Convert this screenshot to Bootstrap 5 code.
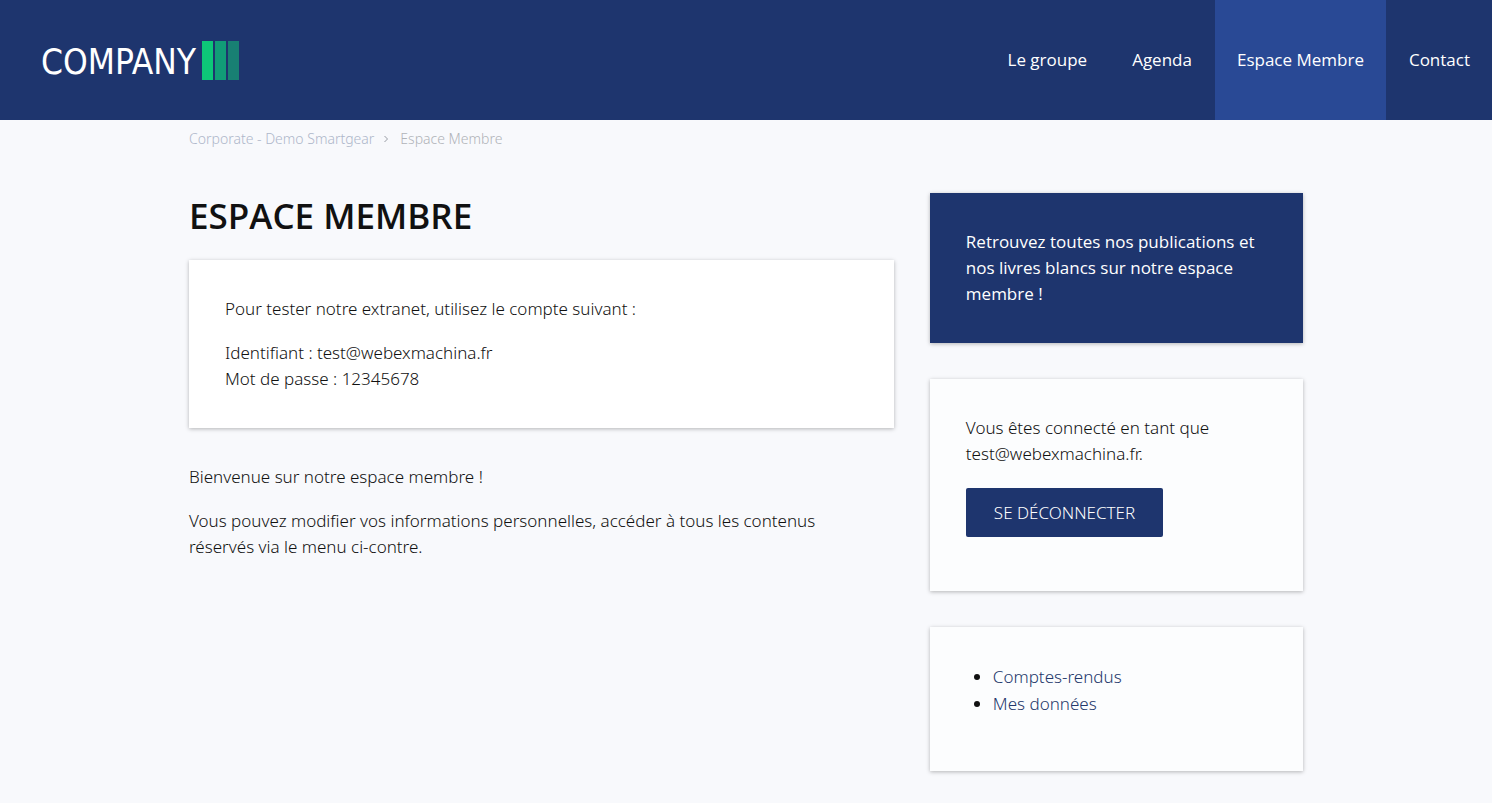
<!DOCTYPE html>
<html lang="fr">
<head>
<meta charset="utf-8">
<meta name="viewport" content="width=device-width, initial-scale=1">
<title>Espace Membre</title>
<link href="https://cdn.jsdelivr.net/npm/bootstrap@5.3.0/dist/css/bootstrap.min.css" rel="stylesheet">
<style>
  :root { --brand: #1e356e; --brand-light: #294995; --gutter: 36px; }
  body {
    font-family: "Noto Sans", "Open Sans", sans-serif;
    font-size: 17px; font-weight: 300; line-height: 26px;
    color: #111; background: #f8f9fc;
  }
  p { margin-bottom: 18px; }
  .site-header { background: var(--brand); min-height: 120px; }
  .site-logo { margin-left: 41px; gap: 6px; }
  .logo-word { font-family: "DejaVu Sans Condensed", "DejaVu Sans", sans-serif; font-size: 35px; line-height: 40px; font-weight: 400; }
  .site-nav { gap: 1px; }
  .site-nav .nav-link { padding: 0 22px; color: #fff; font-family: "Open Sans", sans-serif; font-weight: 400; }
  .site-nav .nav-link.active { background: var(--brand-light); }
  .page-wrap { max-width: 1150px; padding: 0 18px 32px; }
  .breadcrumb { font-size: 14px; line-height: 18px; padding-top: 10px; margin-bottom: 45px; color: #b0b3b8; }
  .breadcrumb a { color: #aeb7ca; }
  .breadcrumb svg { margin: 0 10px 0 9px; }
  .page-grid { display: grid; grid-template-columns: minmax(0, 17fr) minmax(0, 9fr); gap: var(--gutter); }
  h1 { font-family: "Open Sans", sans-serif; font-size: 35px; line-height: 46px; font-weight: 600; margin-bottom: 21px; }
  .panel { padding: var(--gutter); background: #fff; box-shadow: 0 1px 4px rgba(0, 0, 0, .28); }
  .panel p:last-child { margin-bottom: 0; }
  .panel-intro { margin-bottom: var(--gutter); }
  .welcome { padding-right: var(--gutter); }
  .side-column { gap: var(--gutter); }
  .panel-soft { background: #fcfdfe; }
  .panel-brand { background: var(--brand); color: #fff; font-family: "Open Sans", sans-serif; font-weight: 400; }
  .btn-brand { background: var(--brand); color: #fff; border: 0; border-radius: 2px; font-size: 17px; font-weight: 300; line-height: 25px; padding: 12px 28px; margin: 3px 0 18px; }
  .btn-brand:hover { background: var(--brand-light); color: #fff; }
  .member-menu { padding-left: 27px; margin-bottom: 18px; line-height: 27px; }
  .member-menu a { color: #24386b; }
</style>
</head>
<body>
<header class="site-header d-flex align-items-stretch justify-content-between">
  <a href="#" class="site-logo d-flex align-items-center text-white text-decoration-none" aria-label="Company">
    <span class="logo-word pt-1">COMPANY</span>
    <svg width="38" height="40" viewBox="0 0 38 40" aria-hidden="true">
      <path fill="#0dc778" d="M0 1h11v39H0z"/><path fill="#119c77" d="M13 1h11v39H13z"/><path fill="#188073" d="M26 1h11v39H26z"/>
    </svg>
  </a>
  <nav class="site-nav nav align-items-stretch" aria-label="Navigation principale">
    <a class="nav-link d-flex align-items-center" href="#">Le groupe</a>
    <a class="nav-link d-flex align-items-center" href="#">Agenda</a>
    <a class="nav-link d-flex align-items-center active" aria-current="page" href="#">Espace Membre</a>
    <a class="nav-link d-flex align-items-center" href="#">Contact</a>
  </nav>
</header>
<div class="page-wrap container-fluid">
  <nav class="breadcrumb align-items-center" aria-label="Fil d'Ariane">
    <a class="text-decoration-none" href="#">Corporate - Demo Smartgear</a>
    <svg width="7" height="8" viewBox="0 0 7 8" fill="none" stroke="#989ca4" aria-hidden="true"><path d="M1.500 1l3 3-3 3"/></svg>
    <span>Espace Membre</span>
  </nav>
  <div class="page-grid">
    <main>
      <h1>ESPACE MEMBRE</h1>
      <section class="panel panel-intro">
        <p>Pour tester notre extranet, utilisez le compte suivant :</p>
        <p>Identifiant : test@webexmachina.fr<br>Mot de passe : 12345678</p>
      </section>
      <section class="welcome">
        <p>Bienvenue sur notre espace membre !</p>
        <p>Vous pouvez modifier vos informations personnelles, accéder à tous les contenus réservés via le menu ci-contre.</p>
      </section>
    </main>
    <aside class="side-column d-flex flex-column">
      <section class="panel panel-brand"><p>Retrouvez toutes nos publications et nos livres blancs sur notre espace membre !</p></section>
      <section class="panel panel-soft">
        <p>Vous êtes connecté en tant que test@webexmachina.fr.</p>
        <button type="button" class="btn btn-brand">SE DÉCONNECTER</button>
      </section>
      <nav class="panel panel-soft" aria-label="Espace membre">
        <ul class="member-menu">
          <li><a class="text-decoration-none" href="#">Comptes-rendus</a></li>
          <li><a class="text-decoration-none" href="#">Mes données</a></li>
        </ul>
      </nav>
    </aside>
  </div>
</div>
<script src="https://cdn.jsdelivr.net/npm/bootstrap@5.3.0/dist/js/bootstrap.bundle.min.js"></script>
</body>
</html>
